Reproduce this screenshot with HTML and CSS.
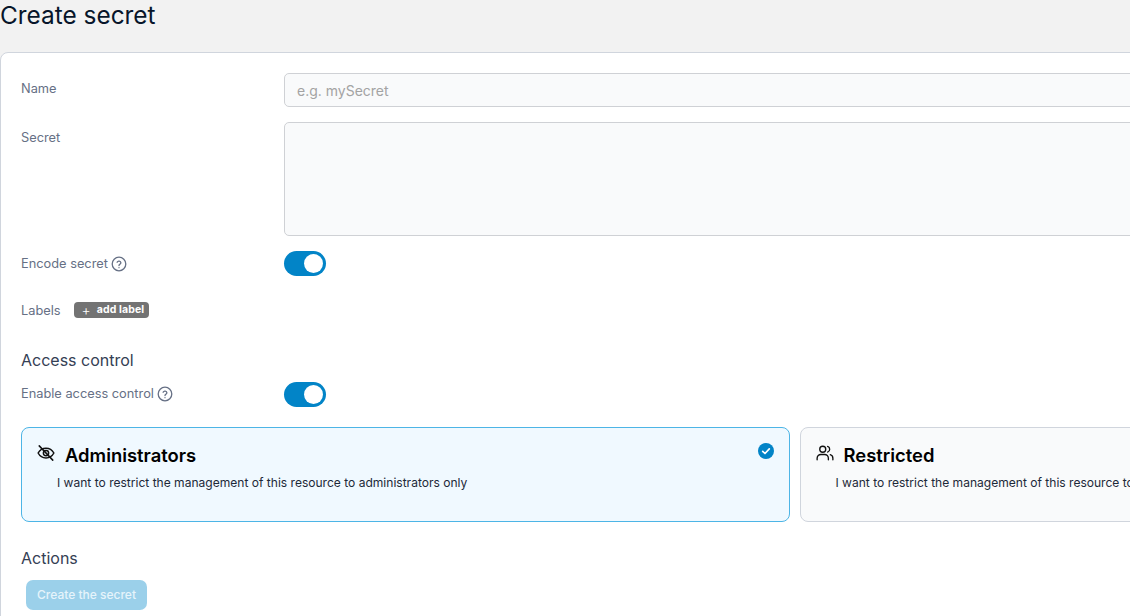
FILE: index.html
```html
<!DOCTYPE html>
<html lang="en">
<head>
<meta charset="utf-8">
<title>Create secret</title>
<link rel="stylesheet" href="styles.css">
</head>
<body>
<div class="page">
  <h1 class="title">Create secret</h1>
  <div class="panel">
    <div class="row row-name">
      <label class="label">Name</label>
      <input class="field" type="text" placeholder="e.g. mySecret">
    </div>
    <div class="row row-secret">
      <label class="label">Secret</label>
      <div class="field area"></div>
    </div>
    <div class="row row-toggle">
      <span class="label inline">Encode secret
        <svg class="help" viewBox="0 0 16 16" fill="none" stroke="currentColor" stroke-width="1.3" stroke-linecap="round"><circle cx="8" cy="8" r="6.8"/><path d="M6.1 6.2a2 2 0 0 1 3.8.6c0 1.3-1.9 1.7-1.9 2.7"/><path d="M8 11.7v.01"/></svg>
      </span>
      <span class="toggle"><span class="knob"></span></span>
    </div>
    <div class="labels">
      <span class="label-text">Labels</span>
      <span class="badge"><span class="plus">+</span>add label</span>
    </div>
    <h2 class="section section-access">Access control</h2>
    <div class="row row-enable">
      <span class="label inline">Enable access control
        <svg class="help" viewBox="0 0 16 16" fill="none" stroke="currentColor" stroke-width="1.3" stroke-linecap="round"><circle cx="8" cy="8" r="6.8"/><path d="M6.1 6.2a2 2 0 0 1 3.8.6c0 1.3-1.9 1.7-1.9 2.7"/><path d="M8 11.7v.01"/></svg>
      </span>
      <span class="toggle"><span class="knob"></span></span>
    </div>
    <div class="choices">
      <div class="choice selected">
        <div class="choice-head">
          <svg class="choice-icon" viewBox="0 0 24 24" fill="none" stroke="currentColor" stroke-width="2" stroke-linecap="round" stroke-linejoin="round"><path d="M1.500 12S5 5.500 12 5.500 22.500 12 22.500 12 19 18.500 12 18.500 1.500 12 1.500 12z"/><circle cx="12" cy="12" r="3.500"/><path d="M3 2.500 21 21.500"/></svg>
          <span class="choice-title">Administrators</span>
        </div>
        <p class="choice-text">I want to restrict the management of this resource to administrators only</p>
        <svg class="check" viewBox="0 0 16 16"><circle cx="8" cy="8" r="8" fill="#0284c7"/><path d="M4.700 8.300 7 10.500l4.300-4.600" fill="none" stroke="#fff" stroke-width="1.700" stroke-linecap="round" stroke-linejoin="round"/></svg>
      </div>
      <div class="choice">
        <div class="choice-head">
          <svg class="choice-icon" viewBox="0 0 24 24" fill="none" stroke="currentColor" stroke-width="1.800" stroke-linecap="round" stroke-linejoin="round"><circle cx="9" cy="7" r="4"/><path d="M1.500 21v-2a5 5 0 0 1 5-5h5a5 5 0 0 1 5 5v2"/><path d="M15.500 3.200a4 4 0 0 1 0 7.600"/><path d="M22.500 21v-2a5 5 0 0 0-3.500-4.800"/></svg>
          <span class="choice-title">Restricted</span>
        </div>
        <p class="choice-text">I want to restrict the management of this resource to a set of users and/or teams</p>
      </div>
    </div>
    <h2 class="section section-actions">Actions</h2>
    <button class="submit" type="button" disabled>Create the secret</button>
  </div>
</div>
</body>
</html>
```
FILE: styles.css
```css
* { box-sizing: border-box; }
html, body { margin: 0; height: 100%; overflow: hidden; }
body { background: #f2f2f2; font-family: Inter, "Liberation Sans", sans-serif; color: #344054; }
.page { width: 1589px; height: 616px; overflow: hidden; }
.title { margin: 0; height: 52px; font-size: 24.400px; line-height: 30px; font-weight: 400; color: #07152a; }
.panel { background: #fff; border: 1px solid #d0d5dd; border-radius: 8px; padding: 20px 20px 0; height: 600px; }
.row { display: flex; align-items: flex-start; }
.label { width: 263px; flex: none; font-size: 12.800px; line-height: 16px; color: #667085; }
.inline { display: flex; align-items: center; gap: 3px; }
.help { width: 16px; height: 16px; color: #667085; }
.field { flex: 1; min-width: 0; display: block; background: #f9fafb; border: 1px solid #cfd1d5; border-radius: 5px; font: 14px/20px Inter, "Liberation Sans", sans-serif; color: #344054; padding: 0 12px; height: 34px; outline: none; }
.field::placeholder { color: #a3a3a3; opacity: 1; }
.row-name .label { padding-top: 8px; }
.row-secret { margin-top: 15px; }
.row-secret .label { padding-top: 8px; }
.area { height: 114px; }
.row-toggle { margin-top: 15px; align-items: center; }
.toggle { width: 42px; height: 25px; border-radius: 13px; background: #0284c7; display: flex; align-items: center; justify-content: flex-end; padding-right: 3px; }
.knob { width: 19px; height: 19px; border-radius: 50%; background: #fff; }
.labels { display: flex; align-items: center; margin-top: 24px; height: 20px; }
.label-text { font-size: 12.800px; color: #667085; margin-right: 13px; }
.badge { display: inline-flex; align-items: center; height: 16px; width: 75px; border-radius: 4px; background: #737373; color: #fff; font-size: 10.500px; font-weight: 700; padding: 0 0 2px 8px; letter-spacing: 0.100px; }
.plus { font-weight: 300; font-size: 14px; margin-right: 6px; line-height: 15px; }
.section { margin: 0; font-size: 16px; line-height: 20px; font-weight: 400; color: #344054; }
.section-access { margin-top: 30px; }
.row-enable { margin-top: 12px; align-items: center; }
.row-enable .label { margin-bottom: 2px; }
.choices { display: flex; gap: 10px; margin-top: 20px; }
.choice { position: relative; flex: 1; height: 95px; border: 1px solid #d0d5dd; border-radius: 8px; background: #f9fafb; padding: 15px; color: #000; }
.choice.selected { background: #f0f9ff; border-color: #4db5e6; }
.choice-head { display: flex; align-items: center; gap: 10px; height: 22px; margin-top: 1px; }
.choice-icon { width: 18px; height: 18px; color: #111; margin-top: -4px; }
.choice-title { font-size: 18.400px; line-height: 22px; font-weight: 600; color: #000; }
.choice-text { margin: 9px 0 0 20px; font-size: 12.060px; line-height: 16px; color: #1d2939; white-space: nowrap; }
.check { position: absolute; top: 15px; right: 15px; width: 16px; height: 16px; }
.section-actions { margin-top: 26px; }
.submit { display: block; margin: 12px 0 0 5px; width: 121px; height: 30px; border: 0; border-radius: 7px; background: #9bd0ea; color: #e6f4fb; font: 500 12px/30px Inter, "Liberation Sans", sans-serif; padding: 0; }
```
